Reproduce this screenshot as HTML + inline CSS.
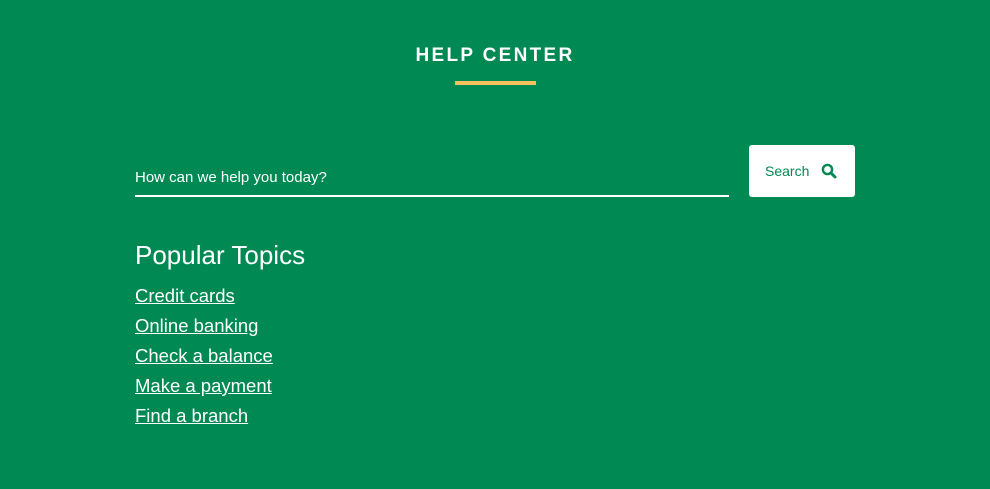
<!DOCTYPE html>
<html><head><style>
body{margin:0;width:990px;height:489px;background:#008953;font-family:"Liberation Sans",sans-serif;color:#fff;position:relative;overflow:hidden}
h1{position:absolute;top:44px;left:0;width:990px;text-align:center;margin:0;font-size:19px;letter-spacing:2.3px;font-weight:bold;line-height:24px}
.bar{position:absolute;left:455px;top:81px;width:81px;height:4px;background:#f5c15d}
.inp{position:absolute;left:135px;top:168px;width:594px;height:27px;border-bottom:2px solid #fff;font-size:15px;line-height:20px}
.btn{position:absolute;left:749px;top:145px;width:106px;height:52px;background:#fff;border-radius:3px;color:#008953;font-size:14px}
.btn span{position:absolute;left:16px;top:18px}
.btn svg{position:absolute;left:72px;top:18px}
h2{position:absolute;left:135px;top:240px;margin:0;font-weight:normal;font-size:26px;line-height:30px}
ul{position:absolute;left:135px;top:281px;margin:0;padding:0;list-style:none}
li{font-size:18.5px;line-height:30px;text-decoration:underline}
</style></head><body>
<h1>HELP CENTER</h1><div class="bar"></div>
<div class="inp">How can we help you today?</div>
<div class="btn"><span>Search</span><svg width="16" height="16" viewBox="0 0 16 16"><circle cx="6.5" cy="6.5" r="4.6" fill="none" stroke="#008953" stroke-width="2.4"/><path d="M10 10l4 4" stroke="#008953" stroke-width="3" stroke-linecap="round"/></svg></div>
<h2>Popular Topics</h2>
<ul><li>Credit cards</li><li>Online banking</li><li>Check a balance</li><li>Make a payment</li><li>Find a branch</li></ul>
</body></html>
